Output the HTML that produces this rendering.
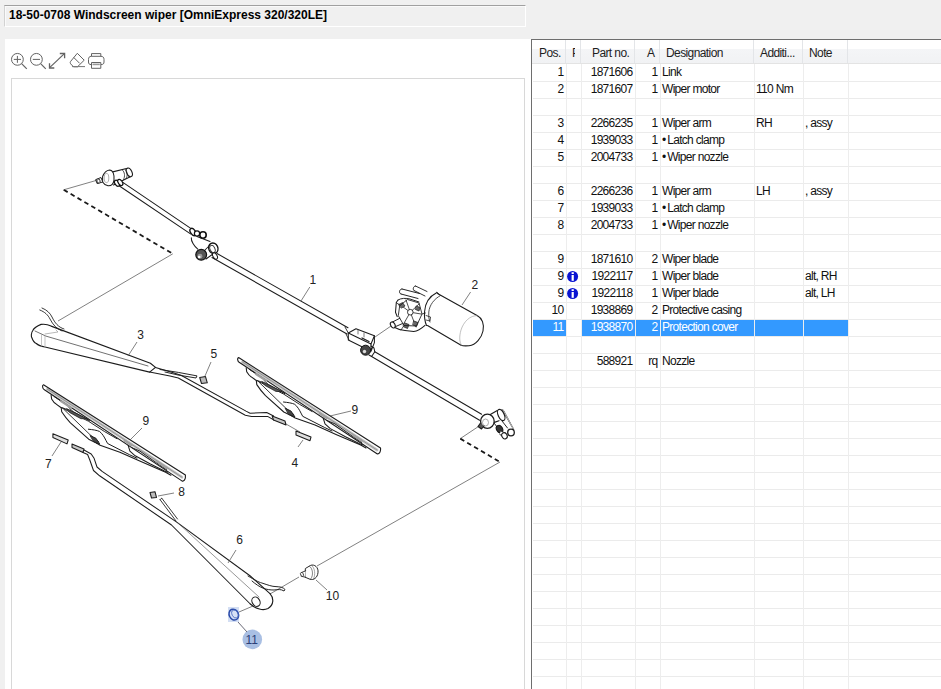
<!DOCTYPE html>
<html><head><meta charset="utf-8">
<style>
*{margin:0;padding:0;box-sizing:border-box}
html,body{width:941px;height:689px;overflow:hidden;background:#f0f0f0;font-family:"Liberation Sans",sans-serif;position:relative}
.abs{position:absolute}
#title{left:4px;top:5px;width:522px;height:22px;border-top:1px solid #a0a0a0;border-left:1px solid #d2d2d2;border-right:1px solid #fff;border-bottom:1px solid #fff;background:#f0f0f0;box-shadow:inset 1px 1px 0 #fafafa}
#title span{position:absolute;left:4px;top:2px;font-weight:bold;font-size:12px;color:#000;white-space:nowrap}
#lpanel{left:5px;top:39px;width:526px;height:650px;background:#fff}
#dbox{left:11px;top:78px;width:514px;height:620px;border:1px solid #d8d8d8;background:#fff}
#tbl{left:531px;top:39px;width:410px;height:650px;border-left:1px solid #6e6e6e;border-top:1px solid #6e6e6e;background:#fff;overflow:hidden}
.hdr{position:absolute;left:0;top:0;width:410px;height:24px;background:linear-gradient(#ffffff 0,#ffffff 9px,#f4f5f7 9px,#f1f2f4 23px);border-bottom:1px solid #e3e3e3}
.ht{position:absolute;top:7px;font-size:12px;line-height:13px;color:#1e1e1e;white-space:nowrap;letter-spacing:-0.6px}
.hl{position:absolute;left:1px;width:410px;height:1px;background:#ebebeb}
.vl{position:absolute;top:24px;width:1px;height:630px;background:#ededed}
.c{position:absolute;font-size:12px;line-height:13px;color:#111;white-space:nowrap;letter-spacing:-0.7px}
.r{text-align:right}
.sel{position:absolute;height:16px;background:#3399ff}
#svgd{position:absolute;left:0;top:0}
</style></head><body>
<div id="title" class="abs"><span>18-50-0708 Windscreen wiper [OmniExpress 320/320LE]</span></div>
<div id="lpanel" class="abs"></div>
<div id="dbox" class="abs"></div>
<svg class="abs" style="left:0;top:0" width="120" height="78" viewBox="0 0 120 78">
<g fill="none" stroke="#626262" stroke-width="1">
<circle cx="17.4" cy="59.35" r="5.9"/>
<path d="M13.8,59.4 H21 M17.4,55.9 V62.8"/>
<path d="M21.6,63.6 L26.8,68.8" stroke-width="1.2"/>
<circle cx="36.4" cy="59.35" r="5.9"/>
<path d="M32.8,59.4 H40"/>
<path d="M40.6,63.6 L45.8,68.8" stroke-width="1.2"/>
<path d="M49.6,67.6 L64.4,53.6" stroke-width="1.2"/>
<path d="M49.5,63.2 L49.5,68 L54.3,68 M59.8,53.5 L64.6,53.5 L64.6,58.3" stroke-width="1.3"/>
<path d="M77.3,53.3 L84.2,60.2 L77.5,66.8 L73.5,66.8 L70.8,64 C70,63 70,62 70.8,61.2 Z"/>
<path d="M73.7,57.4 L79.6,63.3"/>
<path d="M72,66.6 L85,66.6" stroke="#777"/>
<path d="M91.5,56.3 V53.6 H100.8 V56.3"/>
<path d="M91.5,62.5 H100.8 V68.3 H91.5 Z"/>
<path d="M91.3,56.3 H101 C103,56.3 104,57.5 104,59.5 V62 C104,63.8 103,64.6 101,64.6 M91.3,64.6 C89.3,64.6 88.5,63.8 88.5,62 V59.5 C88.5,57.5 89.3,56.3 91.3,56.3"/>
<path d="M92.5,64.4 H99.8" stroke-width="1.6" stroke="#999"/>
</g></svg>
<svg id="svgd" width="531" height="689" viewBox="0 0 531 689">
<line x1="63.7" y1="189.8" x2="172.8" y2="253.8" stroke="#1a1a1a" stroke-width="1.8" stroke-dasharray="4.6 3.4"/>
<line x1="63.7" y1="189.8" x2="96" y2="180.5" stroke="#4a4a4a" stroke-width="0.7" />
<line x1="172.8" y1="253.8" x2="58" y2="321" stroke="#4a4a4a" stroke-width="0.7" />
<line x1="478.6" y1="426.4" x2="460.3" y2="438.6" stroke="#4a4a4a" stroke-width="0.7" />
<line x1="460.3" y1="438.6" x2="500" y2="462" stroke="#1a1a1a" stroke-width="1.8" stroke-dasharray="4.6 3.4"/>
<line x1="500" y1="462" x2="317" y2="566" stroke="#4a4a4a" stroke-width="0.7" />
<line x1="391" y1="326" x2="375" y2="337" stroke="#4a4a4a" stroke-width="0.7" />
<line x1="299" y1="577" x2="270" y2="594" stroke="#4a4a4a" stroke-width="0.7" />
<line x1="253" y1="606" x2="239" y2="612" stroke="#4a4a4a" stroke-width="0.7" />
<path d="M123.2,182.6 L192.6,229.6" stroke="#1c1c1c" stroke-width="1.04" fill="none" stroke-linejoin="round" stroke-linecap="round" />
<path d="M118.7,185.5 L190.5,233.9" stroke="#1c1c1c" stroke-width="1.04" fill="none" stroke-linejoin="round" stroke-linecap="round" />
<path d="M217,253.5 L348,327.8" stroke="#1c1c1c" stroke-width="1.04" fill="none" stroke-linejoin="round" stroke-linecap="round" />
<path d="M212,257.5 L347,334" stroke="#1c1c1c" stroke-width="1.04" fill="none" stroke-linejoin="round" stroke-linecap="round" />
<path d="M374.8,351.8 L481.6,414.2" stroke="#1c1c1c" stroke-width="1.04" fill="none" stroke-linejoin="round" stroke-linecap="round" />
<path d="M371.6,356.5 L479.6,420.3" stroke="#1c1c1c" stroke-width="1.04" fill="none" stroke-linejoin="round" stroke-linecap="round" />
<path d="M111.7,172.1 L127.6,168.3 M113.5,185 L130.8,176.6" stroke="#1c1c1c" stroke-width="1.09" fill="none" stroke-linejoin="round" stroke-linecap="round" />
<ellipse cx="129.3" cy="172.4" rx="2.6" ry="4.6" transform="rotate(-25 129.3 172.4)" fill="#fff" stroke="#1c1c1c" stroke-width="1.1"/>
<path d="M125.2,169.5 C127.5,171 128,176 126,178.5 M122.5,170.2 C124.8,172 125.3,176.5 123.5,179.5" stroke="#1c1c1c" stroke-width="0.78" fill="none" stroke-linejoin="round" stroke-linecap="round" />
<path d="M102.6,176.5 C104,173 106,170.5 109.5,170 C113,170 114.6,175 114,180 C113.5,184 111.5,186 108,185.8 C105,185.3 103.5,183.5 102.6,182 Z" stroke="#1c1c1c" stroke-width="1.04" fill="#fff" stroke-linejoin="round" stroke-linecap="round" />
<ellipse cx="106.5" cy="178" rx="2.3" ry="4.6" fill="none" stroke="#999" stroke-width="0.8"/>
<path d="M96,179.5 L101,177.5 L102.8,182 L97.5,183.5 Z" stroke="#1c1c1c" stroke-width="0.96" fill="#fff" stroke-linejoin="round" stroke-linecap="round" />
<ellipse cx="98.5" cy="181" rx="1.5" ry="2.3" transform="rotate(-20 98.5 181)" fill="#fff" stroke="#222" stroke-width="0.9"/>
<ellipse cx="117" cy="183.3" rx="2" ry="3.4" transform="rotate(-35 117 183.3)" fill="#fff" stroke="#111" stroke-width="1.2"/>
<ellipse cx="120.3" cy="182.4" rx="2" ry="3.4" transform="rotate(-35 120.3 182.4)" fill="#fff" stroke="#111" stroke-width="1.2"/>
<ellipse cx="193" cy="232" rx="2.4" ry="4" transform="rotate(-35 193 232)" fill="#fff" stroke="#111" stroke-width="1.4"/>
<circle cx="197" cy="233.5" r="2.6" fill="#fff" stroke="#111" stroke-width="1.2"/>
<circle cx="203" cy="235" r="3.2" fill="#fff" stroke="#111" stroke-width="1.6"/>
<path d="M191.3,237.8 C191,241 194,246 197.8,249.2" stroke="#1c1c1c" stroke-width="1.04" fill="none" stroke-linejoin="round" stroke-linecap="round" />
<path d="M197,236.5 L210,241.5" stroke="#1c1c1c" stroke-width="1.04" fill="none" stroke-linejoin="round" stroke-linecap="round" />
<ellipse cx="213.3" cy="248.3" rx="4.6" ry="5.4" transform="rotate(-25 213.3 248.3)" fill="#fff" stroke="#111" stroke-width="1.3"/>
<ellipse cx="212.5" cy="249" rx="2.4" ry="3.8" transform="rotate(-25 212.5 249)" fill="none" stroke="#333" stroke-width="0.9"/>
<path d="M204.5,250.5 L210,245 M206,259 L215,252.5" stroke="#1c1c1c" stroke-width="1.04" fill="none" stroke-linejoin="round" stroke-linecap="round" />
<circle cx="201.2" cy="254.8" r="5.4" fill="#555" stroke="#111" stroke-width="1.2"/>
<circle cx="200" cy="256.2" r="2.4" fill="#999"/>
<circle cx="199.2" cy="257" r="1.3" fill="#fff"/>
<ellipse cx="215" cy="256" rx="2" ry="3.5" transform="rotate(-30 215 256)" fill="#fff" stroke="#111" stroke-width="1"/>
<path d="M348.3,333 L356,328.7 L374.4,335.7 L371,344 Z" stroke="#1c1c1c" stroke-width="1.04" fill="#fff" stroke-linejoin="round" stroke-linecap="round" />
<path d="M348.3,333 L348.3,340 L371,351.3 L371,344 M371,351.3 L374.4,342.6 L374.4,335.7" stroke="#1c1c1c" stroke-width="1.04" fill="none" stroke-linejoin="round" stroke-linecap="round" />
<path d="M362,338 L369,341.5" stroke="#1c1c1c" stroke-width="1.30" fill="none" stroke-linejoin="round" stroke-linecap="round" />
<path d="M358,330 L358,334 M364,333 L364,337" stroke="#444" stroke-width="0.70" fill="none" stroke-linejoin="round" stroke-linecap="round" />
<path d="M345,327 L348.3,333 M349,340 L346,334" stroke="#1c1c1c" stroke-width="0.87" fill="none" stroke-linejoin="round" stroke-linecap="round" />
<circle cx="365.6" cy="350.2" r="5" fill="#444" stroke="#111" stroke-width="1"/>
<circle cx="364.5" cy="351.5" r="1.7" fill="#ddd"/>
<path d="M371,346 L374,348 L374.8,351.8 L371.6,356.5 L369,355" stroke="#1c1c1c" stroke-width="1.04" fill="none" stroke-linejoin="round" stroke-linecap="round" />
<path d="M437.5,293.5 L477.5,315.7" stroke="#1c1c1c" stroke-width="1.13" fill="none" stroke-linejoin="round" stroke-linecap="round" />
<path d="M427.5,325.6 L461.5,345.4" stroke="#1c1c1c" stroke-width="1.13" fill="none" stroke-linejoin="round" stroke-linecap="round" />
<path d="M477.5,315.7 C482,318 484.5,324 483,331 C481.5,338 476,345 469,345.8 C465,346 462.5,346 461.5,345.4" stroke="#1c1c1c" stroke-width="1.09" fill="none" stroke-linejoin="round" stroke-linecap="round" />
<path d="M477.5,315.7 C470,315 463.5,322 461,330 C459,337 459.5,342 461.5,345.4" stroke="#999" stroke-width="0.61" fill="none" stroke-linejoin="round" stroke-linecap="round" />
<path d="M437,292.5 C430,296 425,303 424.5,312 C424.2,318 425,322 426.5,325.5" stroke="#1c1c1c" stroke-width="1.09" fill="none" stroke-linejoin="round" stroke-linecap="round" />
<path d="M437,292.5 L440.5,295.5" stroke="#1c1c1c" stroke-width="0.96" fill="none" stroke-linejoin="round" stroke-linecap="round" />
<path d="M440.5,295.5 C434,299 429.5,305 428.8,312 C428.5,317 429,320 430,322" stroke="#333" stroke-width="0.87" fill="none" stroke-linejoin="round" stroke-linecap="round" />
<path d="M426,315.5 L430.5,317 L430,321 L426,320" stroke="#1c1c1c" stroke-width="0.78" fill="none" stroke-linejoin="round" stroke-linecap="round" />
<path d="M402,289 L419.5,293.5 M401,294 L418,298.5 M402,289 C399,289 398.5,293.5 401,294" stroke="#1c1c1c" stroke-width="0.96" fill="none" stroke-linejoin="round" stroke-linecap="round" />
<path d="M415.5,286 L427,291.5 M414,290.5 L425,296 M415.5,286 C413,286 412.5,290 414,290.5" stroke="#1c1c1c" stroke-width="0.91" fill="none" stroke-linejoin="round" stroke-linecap="round" />
<path d="M398,300 C396.5,302 396,303 396.3,302.6 L395.5,312.2 L397.2,316.6 M393.7,327 C397,329 401,330 405,330.5 L413.7,331.4 C418,331 422,328 425,325.3" stroke="#1c1c1c" stroke-width="1.04" fill="none" stroke-linejoin="round" stroke-linecap="round" />
<path d="M398,300 C401,298 406,298 410,299 L419,302" stroke="#1c1c1c" stroke-width="0.96" fill="none" stroke-linejoin="round" stroke-linecap="round" />
<path d="M410.3,312.2 L399,304 M410.3,312.2 L406,300 M410.3,312.2 L419,304 M410.3,312.2 L421,314 M410.3,312.2 L416,327 M410.3,312.2 L403,325" stroke="#1c1c1c" stroke-width="0.78" fill="none" stroke-linejoin="round" stroke-linecap="round" />
<path d="M399,304.5 L402.5,302.5 L405,306 L401.5,308 Z M405,323 L409,324.5 L407.5,328.5 L404,327 Z M414,321 L418,322.5 L416.5,326.5 L413,325 Z M416.5,306 L420,307.5 L419,311 L415.5,309.5 Z" stroke="#1c1c1c" stroke-width="0.70" fill="#666" stroke-linejoin="round" stroke-linecap="round" />
<path d="M400,305.5 L407.5,299.5 L419,303 L422,314 L416.5,326 L404,325.5 L398.5,316 Z" stroke="#1c1c1c" stroke-width="0.87" fill="none" stroke-linejoin="round" stroke-linecap="round" />
<path d="M396.3,302.6 L400,305.5 M422,314 L425.5,313 M404,325.5 L401,330" stroke="#1c1c1c" stroke-width="0.78" fill="none" stroke-linejoin="round" stroke-linecap="round" />
<circle cx="410.3" cy="312.2" r="2.8" fill="#fff" stroke="#222" stroke-width="0.9"/>
<path d="M391.1,322.7 L399.8,318.3 M394.6,327 L402.4,323.6" stroke="#1c1c1c" stroke-width="0.96" fill="none" stroke-linejoin="round" stroke-linecap="round" />
<ellipse cx="392.8" cy="324.9" rx="2.1" ry="3.2" transform="rotate(-30 392.8 324.9)" fill="#fff" stroke="#1c1c1c" stroke-width="1.1"/>
<path d="M490.3,414.6 L497.3,410.5 M494.4,422.4 L499,420.7" stroke="#1c1c1c" stroke-width="1.13" fill="none" stroke-linejoin="round" stroke-linecap="round" />
<path d="M502,409.4 L513.6,429.4 M503.7,410.8 L513,428.2" stroke="#1c1c1c" stroke-width="0.96" fill="none" stroke-linejoin="round" stroke-linecap="round" />
<path d="M503,410 L513.3,428.8" stroke="#aaa" stroke-width="1.39" fill="none" stroke-linejoin="round" stroke-linecap="round" />
<ellipse cx="501.2" cy="415" rx="3" ry="6" transform="rotate(-25 501.2 415)" fill="#fff" stroke="#1c1c1c" stroke-width="1.2"/>
<circle cx="511" cy="432.5" r="3.3" fill="#fff" stroke="#1c1c1c" stroke-width="1.3"/>
<path d="M494,423 L497.5,427.5 M502,421 L507.5,428" stroke="#1c1c1c" stroke-width="0.96" fill="none" stroke-linejoin="round" stroke-linecap="round" />
<ellipse cx="499.5" cy="429" rx="3" ry="3.9" transform="rotate(-30 499.5 429)" fill="#333" stroke="#111" stroke-width="1"/>
<path d="M501,431 L506,433.5 L504,438 L499.5,434" stroke="#1c1c1c" stroke-width="0.96" fill="#fff" stroke-linejoin="round" stroke-linecap="round" />
<ellipse cx="504.5" cy="435.8" rx="2.6" ry="3.2" transform="rotate(-30 504.5 435.8)" fill="#fff" stroke="#1c1c1c" stroke-width="1.1"/>
<ellipse cx="487.4" cy="421.3" rx="6.8" ry="7.1" fill="#fff" stroke="#1c1c1c" stroke-width="1.3"/>
<ellipse cx="485.5" cy="422.5" rx="3" ry="3.5" fill="none" stroke="#888" stroke-width="0.7"/>
<path d="M480.5,423 L478,426.5 L481.5,429 L484,426" stroke="#1c1c1c" stroke-width="1.13" fill="#555" stroke-linejoin="round" stroke-linecap="round" />
<path d="M51.1,326.1 C47,324 44,324 41.1,324.4 C37,326 34,328 32.8,330.5 C31,333 31,337 32,338 C33,341 35,343 36.3,343.5 C39,346 42,346.5 45,347 L149.6,372.1 L155.5,367.4 L150.4,363.2 L51.1,326.1" stroke="#1c1c1c" stroke-width="1.13" fill="none" stroke-linejoin="round" stroke-linecap="round" />
<path d="M35,331 L45.9,336.1 L148,366" stroke="#333" stroke-width="0.70" fill="none" stroke-linejoin="round" stroke-linecap="round" />
<path d="M41.5,334 L41.5,346 M45,336 L45,347" stroke="#aaa" stroke-width="0.70" fill="none" stroke-linejoin="round" stroke-linecap="round" />
<path d="M45,334 L58,332 L56,330" stroke="#999" stroke-width="0.70" fill="none" stroke-linejoin="round" stroke-linecap="round" />
<path d="M39.8,310 C45,312 48,315 50,319 C53,325 57,329 62,331 M42,308 C47,310 50,313 52,317 C55,323 58,327 64,329" stroke="#1c1c1c" stroke-width="0.87" fill="none" stroke-linejoin="round" stroke-linecap="round" />
<path d="M155.5,367.4 L170,371.7 L181,375.2 L246,411.1 L250.1,413.2 L266.7,412.5 L273.6,416" stroke="#1c1c1c" stroke-width="1.04" fill="none" stroke-linejoin="round" stroke-linecap="round" />
<path d="M149.6,372.1 L170,375.9 L178.3,378 L245.3,415.2 L251.5,416.6 L268,416.6 L274,420" stroke="#1c1c1c" stroke-width="1.04" fill="none" stroke-linejoin="round" stroke-linecap="round" />
<path d="M160,369.5 L178.3,372.4 L197,375.9 L196,378 L178,375 L165,372" stroke="#1c1c1c" stroke-width="0.96" fill="none" stroke-linejoin="round" stroke-linecap="round" />
<path d="M272.2,416 L285,421 L286,425 L273.5,420 Z" stroke="#1c1c1c" stroke-width="1.04" fill="#c8c8c8" stroke-linejoin="round" stroke-linecap="round" />
<path d="M199.7,377.5 L205.5,376.6 L207.3,382.8 L201.5,383.5 Z" stroke="#1c1c1c" stroke-width="1.04" fill="#bbb" stroke-linejoin="round" stroke-linecap="round" />
<line x1="286" y1="424" x2="300" y2="432" stroke="#4a4a4a" stroke-width="0.7" />
<path d="M296,431 L311,437 L310,440.7 L296,435 Z" stroke="#1c1c1c" stroke-width="1.04" fill="#e0e0e0" stroke-linejoin="round" stroke-linecap="round" />
<g><path d="M242.5,362 L377,450" stroke="#c4c4c4" stroke-width="2.78" fill="none" stroke-linejoin="round" stroke-linecap="round"/>
<path d="M242.5,362 L377,450" stroke="#8a8a8a" stroke-width="0.87" fill="none" stroke-linejoin="round" stroke-linecap="round"/>
<path d="M238.6,357.6 C237,358 237.5,361.5 239.5,362.5 L377,453.7 C379,454.5 381,452 380.5,447.9 Z" stroke="#1c1c1c" stroke-width="1.13" fill="none" stroke-linejoin="round" stroke-linecap="round"/>
<path d="M246.2,367.8 L246.7,371.8 C248,374 249.5,376 251.3,376.9 L256.3,380.5 L256.8,384.6 C259,388 262,392 265.5,395.7 L283.8,412 L291.9,416" stroke="#1c1c1c" stroke-width="1.09" fill="none" stroke-linejoin="round" stroke-linecap="round"/>
<path d="M249.2,369.3 L262.4,378 C264,380 266,383 268.5,384.6 L279.7,390.7 L284.8,393.7" stroke="#1c1c1c" stroke-width="1.00" fill="none" stroke-linejoin="round" stroke-linecap="round"/>
<path d="M257.4,380.5 L265.5,383.5 L275.6,389.1 L283.8,392.7" stroke="#1c1c1c" stroke-width="0.87" fill="none" stroke-linejoin="round" stroke-linecap="round"/>
<path d="M256.4,380.4 L283.5,394 L299.5,404.3 L312,411.5" stroke="#1c1c1c" stroke-width="0.96" fill="none" stroke-linejoin="round" stroke-linecap="round"/>
<path d="M283.5,402 C288,402.5 292,403 294.7,404.3 C297.5,406.5 299.5,410 301,413.1 L302.7,416.3 L324.4,427.4 L332,431" stroke="#1c1c1c" stroke-width="1.00" fill="none" stroke-linejoin="round" stroke-linecap="round"/>
<path d="M258.8,382 L285.1,407.5 L293.9,414.7" stroke="#1c1c1c" stroke-width="0.87" fill="none" stroke-linejoin="round" stroke-linecap="round"/>
<path d="M285.5,408.5 L291,411 L295,417 L289,414.5 Z" stroke="#1c1c1c" stroke-width="0.87" fill="#444" stroke-linejoin="round" stroke-linecap="round"/>
<path d="M262,381.5 L282,391.5 L276,391.5 L265,385.5 Z" stroke="#1c1c1c" stroke-width="0.70" fill="#555" stroke-linejoin="round" stroke-linecap="round"/>
<path d="M291.9,416 L295.2,418 L315,425 L336,434.4 L360.7,445 L366,448" stroke="#1c1c1c" stroke-width="1.09" fill="none" stroke-linejoin="round" stroke-linecap="round"/>
<path d="M323.2,418 L325,423.9 L330.3,428.6 L345.5,436.8 L359.5,443.8 L363,445" stroke="#1c1c1c" stroke-width="1.04" fill="none" stroke-linejoin="round" stroke-linecap="round"/>
<path d="M326.8,420.4 L335,423.9 L354.8,437.9 L361.8,442.6" stroke="#1c1c1c" stroke-width="0.96" fill="none" stroke-linejoin="round" stroke-linecap="round"/>
<path d="M319.7,413.6 L326.8,418" stroke="#a0a0a0" stroke-width="2.26" fill="none" stroke-linejoin="round" stroke-linecap="round"/>
<path d="M352.5,434.6 L361.8,440.8" stroke="#a0a0a0" stroke-width="2.26" fill="none" stroke-linejoin="round" stroke-linecap="round"/>
<path d="M256,374 L266,380.5" stroke="#a0a0a0" stroke-width="2.09" fill="none" stroke-linejoin="round" stroke-linecap="round"/></g>
<g transform="translate(-195.1 27.2)"><path d="M242.5,362 L377,450" stroke="#c4c4c4" stroke-width="2.78" fill="none" stroke-linejoin="round" stroke-linecap="round"/>
<path d="M242.5,362 L377,450" stroke="#8a8a8a" stroke-width="0.87" fill="none" stroke-linejoin="round" stroke-linecap="round"/>
<path d="M238.6,357.6 C237,358 237.5,361.5 239.5,362.5 L377,453.7 C379,454.5 381,452 380.5,447.9 Z" stroke="#1c1c1c" stroke-width="1.13" fill="none" stroke-linejoin="round" stroke-linecap="round"/>
<path d="M246.2,367.8 L246.7,371.8 C248,374 249.5,376 251.3,376.9 L256.3,380.5 L256.8,384.6 C259,388 262,392 265.5,395.7 L283.8,412 L291.9,416" stroke="#1c1c1c" stroke-width="1.09" fill="none" stroke-linejoin="round" stroke-linecap="round"/>
<path d="M249.2,369.3 L262.4,378 C264,380 266,383 268.5,384.6 L279.7,390.7 L284.8,393.7" stroke="#1c1c1c" stroke-width="1.00" fill="none" stroke-linejoin="round" stroke-linecap="round"/>
<path d="M257.4,380.5 L265.5,383.5 L275.6,389.1 L283.8,392.7" stroke="#1c1c1c" stroke-width="0.87" fill="none" stroke-linejoin="round" stroke-linecap="round"/>
<path d="M256.4,380.4 L283.5,394 L299.5,404.3 L312,411.5" stroke="#1c1c1c" stroke-width="0.96" fill="none" stroke-linejoin="round" stroke-linecap="round"/>
<path d="M283.5,402 C288,402.5 292,403 294.7,404.3 C297.5,406.5 299.5,410 301,413.1 L302.7,416.3 L324.4,427.4 L332,431" stroke="#1c1c1c" stroke-width="1.00" fill="none" stroke-linejoin="round" stroke-linecap="round"/>
<path d="M258.8,382 L285.1,407.5 L293.9,414.7" stroke="#1c1c1c" stroke-width="0.87" fill="none" stroke-linejoin="round" stroke-linecap="round"/>
<path d="M285.5,408.5 L291,411 L295,417 L289,414.5 Z" stroke="#1c1c1c" stroke-width="0.87" fill="#444" stroke-linejoin="round" stroke-linecap="round"/>
<path d="M262,381.5 L282,391.5 L276,391.5 L265,385.5 Z" stroke="#1c1c1c" stroke-width="0.70" fill="#555" stroke-linejoin="round" stroke-linecap="round"/>
<path d="M291.9,416 L295.2,418 L315,425 L336,434.4 L360.7,445 L366,448" stroke="#1c1c1c" stroke-width="1.09" fill="none" stroke-linejoin="round" stroke-linecap="round"/>
<path d="M323.2,418 L325,423.9 L330.3,428.6 L345.5,436.8 L359.5,443.8 L363,445" stroke="#1c1c1c" stroke-width="1.04" fill="none" stroke-linejoin="round" stroke-linecap="round"/>
<path d="M326.8,420.4 L335,423.9 L354.8,437.9 L361.8,442.6" stroke="#1c1c1c" stroke-width="0.96" fill="none" stroke-linejoin="round" stroke-linecap="round"/>
<path d="M319.7,413.6 L326.8,418" stroke="#a0a0a0" stroke-width="2.26" fill="none" stroke-linejoin="round" stroke-linecap="round"/>
<path d="M352.5,434.6 L361.8,440.8" stroke="#a0a0a0" stroke-width="2.26" fill="none" stroke-linejoin="round" stroke-linecap="round"/>
<path d="M256,374 L266,380.5" stroke="#a0a0a0" stroke-width="2.09" fill="none" stroke-linejoin="round" stroke-linecap="round"/></g>
<path d="M52.9,433.7 L68.2,440 L67,443.9 L52.9,437.5 Z" stroke="#1c1c1c" stroke-width="1.04" fill="#e0e0e0" stroke-linejoin="round" stroke-linecap="round" />
<path d="M72,444 L84,449 L83,452.5 L72,447.5 Z" stroke="#1c1c1c" stroke-width="1.04" fill="#c8c8c8" stroke-linejoin="round" stroke-linecap="round" />
<path d="M84,450 L91.2,454 L94.1,458.3 L97,467 L102.1,471.4 L176,521.6 L250.3,576 L270,593.6" stroke="#1c1c1c" stroke-width="1.04" fill="none" stroke-linejoin="round" stroke-linecap="round" />
<path d="M83,452.5 L87.6,454.5 L89.8,460 L93.5,470.5 L99.6,475.8 L171.5,525 L250.3,604" stroke="#1c1c1c" stroke-width="1.04" fill="none" stroke-linejoin="round" stroke-linecap="round" />
<path d="M270,593.6 C274,598 274,605 268,608.5 C263,611 256,609 250.3,604" stroke="#1c1c1c" stroke-width="1.13" fill="none" stroke-linejoin="round" stroke-linecap="round" />
<ellipse cx="256" cy="601.7" rx="3.8" ry="5" transform="rotate(-30 256 601.7)" fill="#fff" stroke="#1c1c1c" stroke-width="1.1"/>
<path d="M178,523 L259,597" stroke="#555" stroke-width="0.61" fill="none" stroke-linejoin="round" stroke-linecap="round" />
<path d="M160.1,499.7 L176,521 M162,498.5 L177.5,519" stroke="#1c1c1c" stroke-width="0.87" fill="none" stroke-linejoin="round" stroke-linecap="round" />
<path d="M160.1,499.7 C161,498 162,498 162,498.5" stroke="#1c1c1c" stroke-width="0.87" fill="none" stroke-linejoin="round" stroke-linecap="round" />
<path d="M248,576 C255,580 258,582 261.9,583 C268,585 272,586.6 276,586.6 C280,586.8 283,587.2 285,589.5 L284,591 C281,589 278,589.5 274,590 C266,590 260,588 252,581" stroke="#1c1c1c" stroke-width="0.96" fill="none" stroke-linejoin="round" stroke-linecap="round" />
<path d="M150,492.5 L155,491.7 L156.5,497.5 L151.5,498 Z" stroke="#1c1c1c" stroke-width="1.04" fill="#bbb" stroke-linejoin="round" stroke-linecap="round" />
<g transform="translate(309.5 572.5) scale(0.84) translate(-309.5 -572.5)">
<path d="M305,567.5 L310.5,564.2 C315.5,562 320.5,566.5 319.6,572.8 C318.8,578.8 314.5,582 310,580.5 L304.5,578.2 Z" stroke="#1c1c1c" stroke-width="1.13" fill="#fff" stroke-linejoin="round" stroke-linecap="round" />
<path d="M309.5,565 C313.5,567.5 314.5,576 311,580.2" stroke="#444" stroke-width="0.78" fill="none" stroke-linejoin="round" stroke-linecap="round" />
<path d="M312,564 C316,567 317,575 314,580.8" stroke="#666" stroke-width="0.70" fill="none" stroke-linejoin="round" stroke-linecap="round" />
<path d="M305,570.5 L300.5,572.3 L299.6,577 L304.3,578" stroke="#1c1c1c" stroke-width="1.04" fill="#fff" stroke-linejoin="round" stroke-linecap="round" />
<ellipse cx="300.6" cy="574.8" rx="1.6" ry="2.6" transform="rotate(-25 300.6 574.8)" fill="#fff" stroke="#222" stroke-width="0.9"/>
</g>
<rect x="228" y="607" width="11" height="15" fill="#c8d6f0" opacity="0.8"/>
<ellipse cx="233.8" cy="614.6" rx="4.6" ry="5.6" transform="rotate(-25 233.8 614.6)" fill="#d6e0f5" stroke="#2a4aa8" stroke-width="1.5"/>
<ellipse cx="235" cy="614" rx="3" ry="4.2" transform="rotate(-25 235 614)" fill="none" stroke="#4a6ac0" stroke-width="0.8"/>
<circle cx="252.3" cy="639.4" r="9.8" fill="#a9bfe3"/>
<line x1="238" y1="622" x2="247" y2="632" stroke="#445" stroke-width="0.8" />
<line x1="309.8" y1="287" x2="301" y2="301" stroke="#4a4a4a" stroke-width="0.7" />
<text x="309.5" y="284.2" font-size="12" fill="#222" font-family="Liberation Sans">1</text>
<line x1="470.6" y1="292" x2="462" y2="305" stroke="#4a4a4a" stroke-width="0.7" />
<text x="471.5" y="288.8" font-size="12" fill="#222" font-family="Liberation Sans">2</text>
<line x1="137" y1="342" x2="128" y2="356" stroke="#4a4a4a" stroke-width="0.7" />
<text x="137.3" y="338.8" font-size="12" fill="#222" font-family="Liberation Sans">3</text>
<line x1="211" y1="362" x2="205" y2="376" stroke="#4a4a4a" stroke-width="0.7" />
<text x="210.5" y="358.2" font-size="12" fill="#222" font-family="Liberation Sans">5</text>
<line x1="351" y1="411" x2="330" y2="416" stroke="#4a4a4a" stroke-width="0.7" />
<text x="351.5" y="414" font-size="12" fill="#222" font-family="Liberation Sans">9</text>
<line x1="298" y1="447" x2="303" y2="440" stroke="#4a4a4a" stroke-width="0.7" />
<text x="291.5" y="467.4" font-size="12" fill="#222" font-family="Liberation Sans">4</text>
<line x1="142" y1="428" x2="130" y2="440" stroke="#4a4a4a" stroke-width="0.7" />
<text x="142.6" y="425.4" font-size="12" fill="#222" font-family="Liberation Sans">9</text>
<line x1="52" y1="456" x2="61" y2="442" stroke="#4a4a4a" stroke-width="0.7" />
<text x="45" y="467.8" font-size="12" fill="#222" font-family="Liberation Sans">7</text>
<line x1="158" y1="496" x2="174" y2="493" stroke="#4a4a4a" stroke-width="0.7" />
<text x="178.3" y="496.2" font-size="12" fill="#222" font-family="Liberation Sans">8</text>
<line x1="236" y1="550" x2="228" y2="563" stroke="#4a4a4a" stroke-width="0.7" />
<text x="236.3" y="544.2" font-size="12" fill="#222" font-family="Liberation Sans">6</text>
<line x1="316" y1="580" x2="327" y2="590" stroke="#4a4a4a" stroke-width="0.7" />
<text x="325.8" y="599.7" font-size="12" fill="#222" font-family="Liberation Sans">10</text>
<text x="245.5" y="643.8" font-size="12" fill="#2b3f78" font-family="Liberation Sans">11</text>
</svg>
<div id="tbl" class="abs">
<div class="hdr"></div>
<div class="abs" style="left:33px;top:0;width:1px;height:23px;background:#e3e5e8"></div>
<div class="abs" style="left:48px;top:0;width:1px;height:23px;background:#e3e5e8"></div>
<div class="abs" style="left:102px;top:0;width:1px;height:23px;background:#e3e5e8"></div>
<div class="abs" style="left:127px;top:0;width:1px;height:23px;background:#e3e5e8"></div>
<div class="abs" style="left:221px;top:0;width:1px;height:23px;background:#e3e5e8"></div>
<div class="abs" style="left:270px;top:0;width:1px;height:23px;background:#e3e5e8"></div>
<div class="abs" style="left:315px;top:0;width:1px;height:23px;background:#e3e5e8"></div>
<div class="ht" style="left:7px">Pos.</div>
<div class="ht" style="left:40px;width:3px;overflow:hidden">P</div>
<div class="ht" style="left:60px">Part no.</div>
<div class="ht" style="left:115px">A</div>
<div class="ht" style="left:134px">Designation</div>
<div class="ht" style="left:228px">Additi...</div>
<div class="ht" style="left:277px">Note</div>
<div class="hl" style="top:41px"></div>
<div class="hl" style="top:58px"></div>
<div class="hl" style="top:75px"></div>
<div class="hl" style="top:92px"></div>
<div class="hl" style="top:109px"></div>
<div class="hl" style="top:126px"></div>
<div class="hl" style="top:143px"></div>
<div class="hl" style="top:160px"></div>
<div class="hl" style="top:177px"></div>
<div class="hl" style="top:194px"></div>
<div class="hl" style="top:211px"></div>
<div class="hl" style="top:228px"></div>
<div class="hl" style="top:245px"></div>
<div class="hl" style="top:262px"></div>
<div class="hl" style="top:279px"></div>
<div class="hl" style="top:296px"></div>
<div class="hl" style="top:313px"></div>
<div class="hl" style="top:330px"></div>
<div class="hl" style="top:347px"></div>
<div class="hl" style="top:364px"></div>
<div class="hl" style="top:381px"></div>
<div class="hl" style="top:398px"></div>
<div class="hl" style="top:415px"></div>
<div class="hl" style="top:432px"></div>
<div class="hl" style="top:449px"></div>
<div class="hl" style="top:466px"></div>
<div class="hl" style="top:483px"></div>
<div class="hl" style="top:500px"></div>
<div class="hl" style="top:517px"></div>
<div class="hl" style="top:534px"></div>
<div class="hl" style="top:551px"></div>
<div class="hl" style="top:568px"></div>
<div class="hl" style="top:585px"></div>
<div class="hl" style="top:602px"></div>
<div class="hl" style="top:619px"></div>
<div class="hl" style="top:636px"></div>
<div class="vl" style="left:34px"></div>
<div class="vl" style="left:49px"></div>
<div class="vl" style="left:103px"></div>
<div class="vl" style="left:128px"></div>
<div class="vl" style="left:222px"></div>
<div class="vl" style="left:271px"></div>
<div class="vl" style="left:316px"></div>
<div class="sel" style="left:1px;top:280px;width:33px"></div>
<div class="sel" style="left:50px;top:280px;width:53px"></div>
<div class="sel" style="left:104px;top:280px;width:24px"></div>
<div class="sel" style="left:129px;top:280px;width:93px"></div>
<div class="sel" style="left:223px;top:280px;width:48px"></div>
<div class="sel" style="left:272px;top:280px;width:44px"></div>
<div class="c r" style="right:377.5px;top:26px;color:#111">1</div>
<div class="c r" style="right:308.5px;top:26px;color:#111">1871606</div>
<div class="c r" style="right:283.5px;top:26px;color:#111">1</div>
<div class="c" style="left:130px;top:26px;color:#111">Link</div>
<div class="c r" style="right:377.5px;top:43px;color:#111">2</div>
<div class="c r" style="right:308.5px;top:43px;color:#111">1871607</div>
<div class="c r" style="right:283.5px;top:43px;color:#111">1</div>
<div class="c" style="left:130px;top:43px;color:#111">Wiper motor</div>
<div class="c" style="left:224px;top:43px;color:#111">110 Nm</div>
<div class="c r" style="right:377.5px;top:77px;color:#111">3</div>
<div class="c r" style="right:308.5px;top:77px;color:#111">2266235</div>
<div class="c r" style="right:283.5px;top:77px;color:#111">1</div>
<div class="c" style="left:130px;top:77px;color:#111">Wiper arm</div>
<div class="c" style="left:224px;top:77px;color:#111">RH</div>
<div class="c" style="left:273px;top:77px;color:#111">, assy</div>
<div class="c r" style="right:377.5px;top:94px;color:#111">4</div>
<div class="c r" style="right:308.5px;top:94px;color:#111">1939033</div>
<div class="c r" style="right:283.5px;top:94px;color:#111">1</div>
<div class="c" style="left:130px;top:94px;color:#111">• Latch clamp</div>
<div class="c r" style="right:377.5px;top:111px;color:#111">5</div>
<div class="c r" style="right:308.5px;top:111px;color:#111">2004733</div>
<div class="c r" style="right:283.5px;top:111px;color:#111">1</div>
<div class="c" style="left:130px;top:111px;color:#111">• Wiper nozzle</div>
<div class="c r" style="right:377.5px;top:145px;color:#111">6</div>
<div class="c r" style="right:308.5px;top:145px;color:#111">2266236</div>
<div class="c r" style="right:283.5px;top:145px;color:#111">1</div>
<div class="c" style="left:130px;top:145px;color:#111">Wiper arm</div>
<div class="c" style="left:224px;top:145px;color:#111">LH</div>
<div class="c" style="left:273px;top:145px;color:#111">, assy</div>
<div class="c r" style="right:377.5px;top:162px;color:#111">7</div>
<div class="c r" style="right:308.5px;top:162px;color:#111">1939033</div>
<div class="c r" style="right:283.5px;top:162px;color:#111">1</div>
<div class="c" style="left:130px;top:162px;color:#111">• Latch clamp</div>
<div class="c r" style="right:377.5px;top:179px;color:#111">8</div>
<div class="c r" style="right:308.5px;top:179px;color:#111">2004733</div>
<div class="c r" style="right:283.5px;top:179px;color:#111">1</div>
<div class="c" style="left:130px;top:179px;color:#111">• Wiper nozzle</div>
<div class="c r" style="right:377.5px;top:213px;color:#111">9</div>
<div class="c r" style="right:308.5px;top:213px;color:#111">1871610</div>
<div class="c r" style="right:283.5px;top:213px;color:#111">2</div>
<div class="c" style="left:130px;top:213px;color:#111">Wiper blade</div>
<div class="c r" style="right:377.5px;top:230px;color:#111">9</div>
<svg class="abs" style="left:35px;top:230px" width="12" height="13" viewBox="0 0 12 13"><circle cx="5.6" cy="6.5" r="5.5" fill="#0a14d2"/><rect x="4.6" y="2.2" width="2.2" height="1.8" fill="#fff"/><rect x="4.6" y="5" width="2.2" height="5.8" fill="#fff"/></svg>
<div class="c r" style="right:308.5px;top:230px;color:#111">1922117</div>
<div class="c r" style="right:283.5px;top:230px;color:#111">1</div>
<div class="c" style="left:130px;top:230px;color:#111">Wiper blade</div>
<div class="c" style="left:273px;top:230px;color:#111">alt, RH</div>
<div class="c r" style="right:377.5px;top:247px;color:#111">9</div>
<svg class="abs" style="left:35px;top:247px" width="12" height="13" viewBox="0 0 12 13"><circle cx="5.6" cy="6.5" r="5.5" fill="#0a14d2"/><rect x="4.6" y="2.2" width="2.2" height="1.8" fill="#fff"/><rect x="4.6" y="5" width="2.2" height="5.8" fill="#fff"/></svg>
<div class="c r" style="right:308.5px;top:247px;color:#111">1922118</div>
<div class="c r" style="right:283.5px;top:247px;color:#111">1</div>
<div class="c" style="left:130px;top:247px;color:#111">Wiper blade</div>
<div class="c" style="left:273px;top:247px;color:#111">alt, LH</div>
<div class="c r" style="right:377.5px;top:264px;color:#111">10</div>
<div class="c r" style="right:308.5px;top:264px;color:#111">1938869</div>
<div class="c r" style="right:283.5px;top:264px;color:#111">2</div>
<div class="c" style="left:130px;top:264px;color:#111">Protective casing</div>
<div class="c r" style="right:377.5px;top:281px;color:#fff">11</div>
<div class="c r" style="right:308.5px;top:281px;color:#fff">1938870</div>
<div class="c r" style="right:283.5px;top:281px;color:#fff">2</div>
<div class="c" style="left:130px;top:281px;color:#fff">Protection cover</div>
<div class="c r" style="right:308.5px;top:315px;color:#111">588921</div>
<div class="c r" style="right:283.5px;top:315px;color:#111">rq</div>
<div class="c" style="left:130px;top:315px;color:#111">Nozzle</div>
</div>
</body></html>
